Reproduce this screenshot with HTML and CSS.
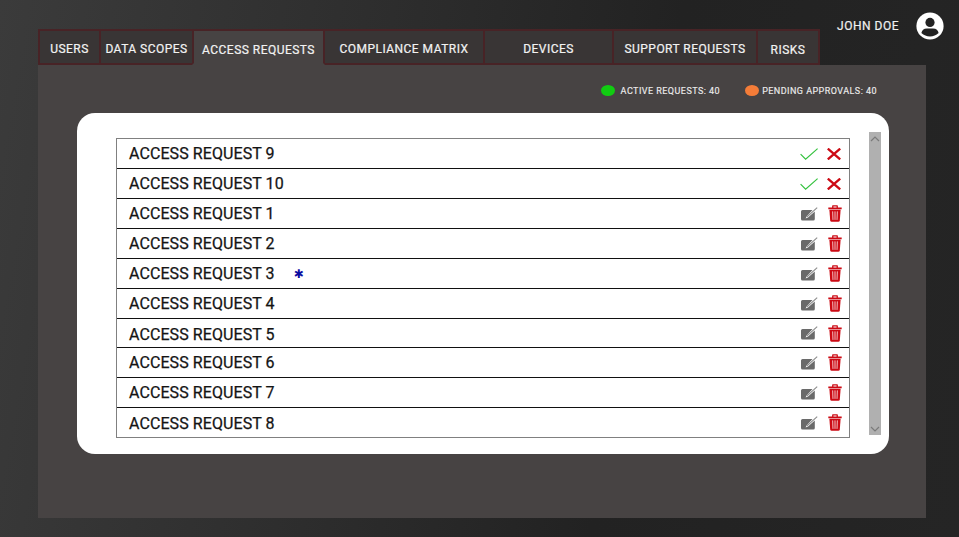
FILE: index.html
```html
<!DOCTYPE html>
<html lang="en">
<head>
<meta charset="utf-8">
<title>Access Requests</title>
<link rel="stylesheet" href="styles.css">
</head>
<body>
<svg class="defs" width="0" height="0" aria-hidden="true">
  <symbol id="i-check" viewBox="0 0 18 12"><path d="M0.6 6.2 L5.6 11.2 L17.6 0.6" fill="none" stroke="#35c23f" stroke-width="1.2"/></symbol>
  <symbol id="i-x" viewBox="0 0 14 12"><path d="M0.8 0.6 L13.2 11.4 M13.2 0.6 L0.8 11.4" fill="none" stroke="#cc0a14" stroke-width="2.3"/></symbol>
  <symbol id="i-edit" viewBox="0 0 17 14">
    <path d="M1.5 3 H11.5 L5.6 9.4 L4.6 11.4 L7 10.6 L13.8 4.6 V12 Q13.8 13.5 12.3 13.5 H1.5 Q0 13.5 0 12 V4.5 Q0 3 1.5 3 Z" fill="#6a6a6a"/>
    <path d="M6 9.8 L16.2 0.6" fill="none" stroke="#8a8a8a" stroke-width="1.1"/>
  </symbol>
  <symbol id="i-trash" viewBox="0 0 13 16">
    <path d="M0.2 2.4 H12.8 V3.9 H0.2 Z M3.8 2.6 V0.9 Q3.8 0.3 4.4 0.3 H8.6 Q9.2 0.3 9.2 0.9 V2.6 H8 V1.3 H5 V2.6 Z" fill="#cc0a14"/>
    <path d="M1.2 4.4 H11.8 L11 14.6 Q10.9 15.8 9.7 15.8 H3.3 Q2.1 15.8 2 14.6 Z" fill="#cc0a14"/>
    <path d="M4.3 6 L4.6 14 M6.5 6 V14 M8.7 6 L8.4 14" fill="none" stroke="#fff" stroke-width="0.7"/>
  </symbol>
</svg>

<header class="top">
  <nav class="tabs">
    <a class="tab tab-users">USERS</a>
    <a class="tab tab-scopes">DATA SCOPES</a>
    <a class="tab tab-access is-active">ACCESS REQUESTS</a>
    <a class="tab tab-matrix">COMPLIANCE MATRIX</a>
    <a class="tab tab-devices">DEVICES</a>
    <a class="tab tab-support">SUPPORT REQUESTS</a>
    <a class="tab tab-risks">RISKS</a>
  </nav>
  <div class="user">
    <span class="user-name">JOHN DOE</span>
    <svg class="avatar" viewBox="0 0 28 28" width="28" height="28">
      <circle cx="14" cy="14" r="13.6" fill="#fff"/>
      <circle cx="14" cy="10.4" r="4.6" fill="#222"/>
      <path d="M5.4 21 Q6 16.6 11 16.4 H17 Q22 16.6 22.6 21 Q19 24.4 14 24.4 Q9 24.4 5.4 21 Z" fill="#222"/>
    </svg>
  </div>
</header>

<main class="panel">
  <div class="legend">
    <span class="legend-item"><i class="dot dot-green"></i><span class="legend-label">ACTIVE REQUESTS: 40</span></span>
    <span class="legend-item legend-pending"><i class="dot dot-orange"></i><span class="legend-label">PENDING APPROVALS: 40</span></span>
  </div>
  <section class="card">
    <ul class="list">
      <li class="row"><span class="name">ACCESS REQUEST 9</span><span class="acts"><svg class="ic-check"><use href="#i-check"/></svg><svg class="ic-x"><use href="#i-x"/></svg></span></li>
      <li class="row"><span class="name">ACCESS REQUEST 10</span><span class="acts"><svg class="ic-check"><use href="#i-check"/></svg><svg class="ic-x"><use href="#i-x"/></svg></span></li>
      <li class="row"><span class="name">ACCESS REQUEST 1</span><span class="acts"><svg class="ic-edit"><use href="#i-edit"/></svg><svg class="ic-trash"><use href="#i-trash"/></svg></span></li>
      <li class="row"><span class="name">ACCESS REQUEST 2</span><span class="acts"><svg class="ic-edit"><use href="#i-edit"/></svg><svg class="ic-trash"><use href="#i-trash"/></svg></span></li>
      <li class="row"><span class="name">ACCESS REQUEST 3</span><span class="star">✱</span><span class="acts"><svg class="ic-edit"><use href="#i-edit"/></svg><svg class="ic-trash"><use href="#i-trash"/></svg></span></li>
      <li class="row"><span class="name">ACCESS REQUEST 4</span><span class="acts"><svg class="ic-edit"><use href="#i-edit"/></svg><svg class="ic-trash"><use href="#i-trash"/></svg></span></li>
      <li class="row row-short"><span class="name name-low">ACCESS REQUEST 5</span><span class="acts"><svg class="ic-edit"><use href="#i-edit"/></svg><svg class="ic-trash"><use href="#i-trash"/></svg></span></li>
      <li class="row"><span class="name">ACCESS REQUEST 6</span><span class="acts"><svg class="ic-edit"><use href="#i-edit"/></svg><svg class="ic-trash"><use href="#i-trash"/></svg></span></li>
      <li class="row"><span class="name">ACCESS REQUEST 7</span><span class="acts"><svg class="ic-edit"><use href="#i-edit"/></svg><svg class="ic-trash"><use href="#i-trash"/></svg></span></li>
      <li class="row row-last"><span class="name name-low">ACCESS REQUEST 8</span><span class="acts"><svg class="ic-edit"><use href="#i-edit"/></svg><svg class="ic-trash"><use href="#i-trash"/></svg></span></li>
    </ul>
    <div class="scrollbar">
      <svg class="chev" viewBox="0 0 10 6" width="10" height="6"><path d="M1 5 L5 1 L9 5" fill="none" stroke="#7a7a7a" stroke-width="1.2"/></svg>
      <svg class="chev" viewBox="0 0 10 6" width="10" height="6"><path d="M1 1 L5 5 L9 1" fill="none" stroke="#7a7a7a" stroke-width="1.2"/></svg>
    </div>
  </section>
</main>
</body>
</html>
```
FILE: styles.css
```css
* { box-sizing: border-box; }
html, body { margin: 0; height: 100%; }
body {
  width: 959px;
  height: 537px;
  overflow: hidden;
  background: linear-gradient(100deg, #3b3b3b 0%, #2e2e2e 35%, #222 65%, #252525 100%);
  font-family: Roboto, "Liberation Sans", sans-serif;
  color: #fff;
}
.defs { display: block; height: 0; }

.top {
  display: flex;
  justify-content: space-between;
  align-items: flex-start;
  height: 65px;
  padding-left: 38px;
  padding-right: 15px;
}
.tabs { display: flex; margin-top: 29px; height: 36px; }
.tab {
  display: flex;
  align-items: center;
  justify-content: center;
  height: 36px;
  background: #393535;
  border: 2px solid #482326;
  font-size: 12px;
  font-weight: 400;
  -webkit-text-stroke: 0.2px #f2f2f2;
  letter-spacing: 0.47px;
  color: #f2f2f2;
  white-space: nowrap;
  padding-top: 4px;
  margin-right: -2px;
}
.tab-users { width: 63px; }
.tab-scopes { width: 95px; }
.tab-access { width: 133px; }
.tab-matrix { width: 162px; }
.tab-devices { width: 131px; }
.tab-support { width: 146px; }
.tab-risks { width: 64px; padding-top: 6px; }
.tab.is-active {
  position: relative;
  background: #474343;
  border-bottom-color: #474343;
  padding-top: 6px;
}

.user {
  display: flex;
  align-items: center;
  gap: 17px;
  margin-top: 12px;
}
.user-name { font-size: 12px; font-weight: 400; -webkit-text-stroke: 0.2px #f0f0f0; letter-spacing: 0.5px; color: #f0f0f0; }
.avatar { display: block; }

.panel {
  width: 888px;
  height: 453px;
  margin-left: 38px;
  background: #474343;
  padding: 0 37px 0 39px;
}
.legend {
  display: flex;
  justify-content: flex-end;
  height: 48px;
  padding-top: 19px;
  padding-right: 12px;
}
.legend-item { display: flex; align-items: center; height: 13px; }
.legend-pending { margin-left: 25px; }
.legend-label { font-size: 9px; font-weight: 400; -webkit-text-stroke: 0.15px #ececec; letter-spacing: 0.46px; color: #ececec; }
.dot { width: 14px; height: 11px; border-radius: 50%; margin-right: 6px; display: block; }
.legend-pending .dot { margin-right: 3px; }
.dot-green { background: #11cc11; }
.dot-orange { background: #f47c38; }

.card {
  position: relative;
  display: flex;
  align-items: flex-start;
  width: 812px;
  height: 341px;
  background: #fff;
  border-radius: 18px;
  padding: 25px 8px 0 39px;
}
.list {
  list-style: none;
  margin: 0;
  padding: 0;
  width: 734px;
  border: 1px solid #808080;
}
.row {
  display: flex;
  align-items: center;
  height: 30px;
  padding-left: 12px;
  padding-right: 7px;
  border-bottom: 1px solid #111;
  color: #141414;
}
.row-short { height: 29px; }
.row-last { border-bottom: 0; height: 29px; }
.name { font-size: 16px; font-weight: 400; -webkit-text-stroke: 0.25px #141414; letter-spacing: 0.08px; }
.name-low { padding-top: 2px; }
.star { margin-left: 19px; font-size: 12px; color: #0b0ba0; font-family: "DejaVu Sans", sans-serif; font-weight: 700; }
.acts { margin-left: auto; display: flex; align-items: center; }
.ic-check { width: 18px; height: 12px; margin-right: 9px; display: block; }
.ic-x { width: 14px; height: 12px; display: block; margin-right: 1px; }
.ic-edit { width: 17px; height: 14px; margin-right: 10px; display: block; }
.ic-trash { width: 14px; height: 17px; display: block; margin-right: 0; }

.scrollbar {
  display: flex;
  flex-direction: column;
  justify-content: space-between;
  align-items: center;
  width: 12px;
  height: 303px;
  margin-left: 19px;
  margin-top: -6px;
  padding: 4px 0 3px;
  background: #b0b0b0;
}
.chev { display: block; }
```
